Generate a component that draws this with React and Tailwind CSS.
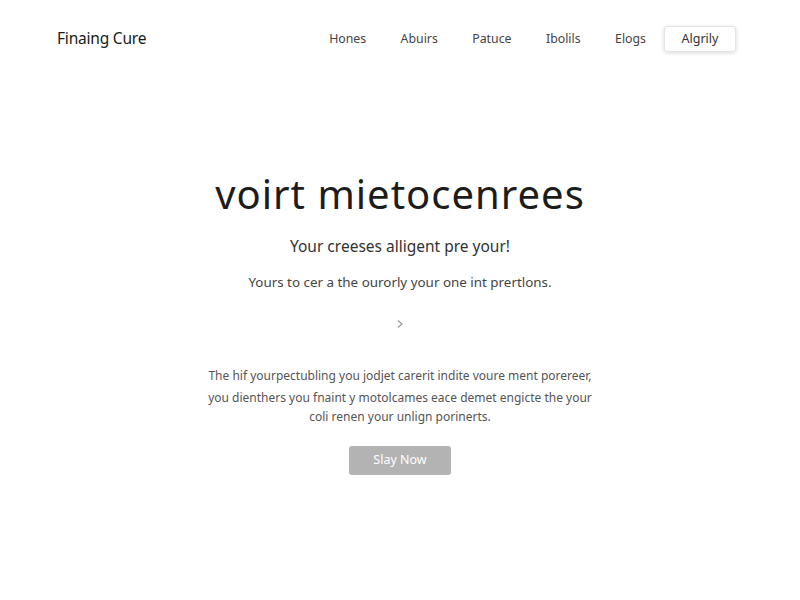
import React from "react";

const navLinks = ["Hones", "Abuirs", "Patuce", "Ibolils", "Elogs"];

export default function App() {
  return (
    <div
      className="min-h-screen w-full bg-white text-[#222]"
      style={{ fontFamily: "'Noto Sans', 'DejaVu Sans', sans-serif" }}
    >
      {/* header */}
      <header className="flex items-center justify-between pl-[57px] pr-[64px] pt-[26px]">
        <div className="text-[15.5px] tracking-[-0.2px] text-[#1a1a1a]">Finaing Cure</div>
        <div className="flex items-center gap-[18px]">
          <nav className="flex items-center gap-[34.5px]">
            {navLinks.map((l) => (
              <a key={l} className="text-[12.3px] text-[#444]">
                {l}
              </a>
            ))}
          </nav>
          <button className="h-[26px] w-[72px] rounded-[3px] border border-[#e3e3e3] bg-white text-[12.5px] text-[#333] shadow-[0_1px_4px_rgba(0,0,0,0.15)]">
            Algrily
          </button>
        </div>
      </header>

      {/* hero */}
      <main className="flex flex-col items-center pt-[122px] text-center">
        <h1 className="text-[40px] leading-none tracking-[1px] text-[#1c1c1c]">voirt mietocenrees</h1>
        <p className="mt-[21px] text-[15.5px] leading-[22px] text-[#333]">Your creeses alligent pre your!</p>
        <p className="mt-[15px] text-[13.4px] leading-[20px] text-[#444]">
          Yours to cer a the ourorly your one int prertlons.
        </p>
        <svg className="mt-[27px]" width="8" height="10" viewBox="0 0 8 10" fill="none">
          <path d="M2 1.5 L6 5 L2 8.5" stroke="#999" strokeWidth="1.2" />
        </svg>
        <div className="mt-[37px] text-[12px] leading-[19px] text-[#555]">
          <p>The hif yourpectubling you jodjet carerit indite voure ment porereer,</p>
          <p className="mt-[3px]">you dienthers you fnaint y motolcames eace demet engicte the your</p>
          <p>coli renen your unlign porinerts.</p>
        </div>
        <button className="mt-[20px] h-[29px] w-[102px] rounded-[3px] bg-[#b3b3b3] text-[12.5px] text-white">
          Slay Now
        </button>
      </main>
    </div>
  );
}
